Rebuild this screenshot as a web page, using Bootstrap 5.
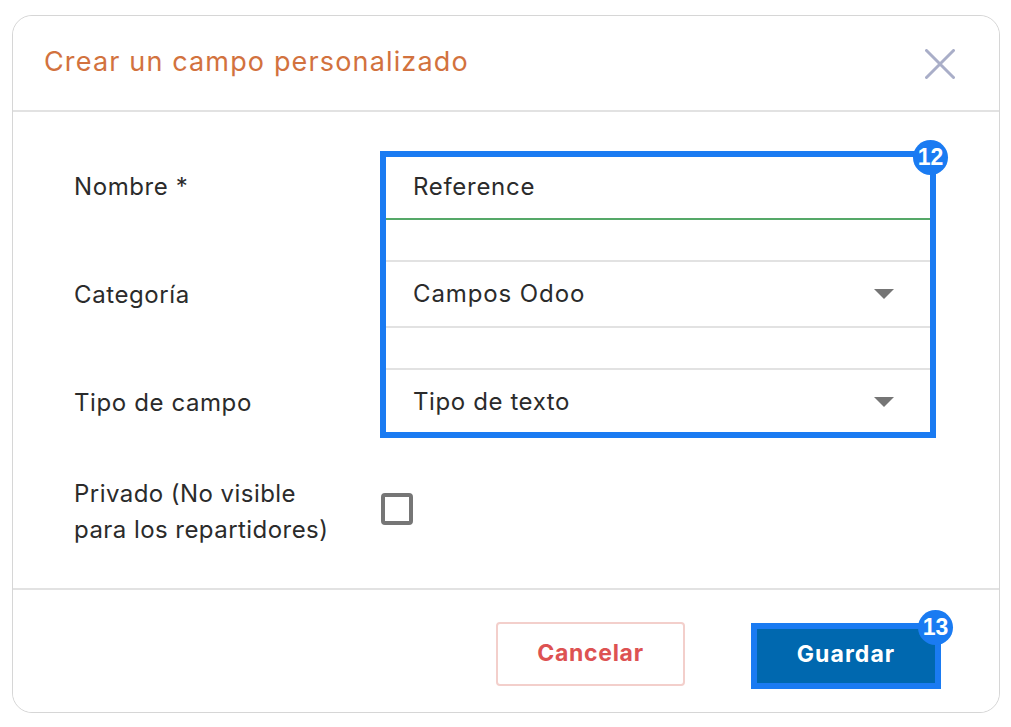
<!DOCTYPE html>
<html lang="es">
<head>
<meta charset="utf-8">
<title>Crear un campo personalizado</title>
<link href="https://cdn.jsdelivr.net/npm/bootstrap@5.3.0/dist/css/bootstrap.min.css" rel="stylesheet">
<style>
html,body{height:100%;background:#fff}
body{padding:15px 11px 14px 12px;font-family:Inter,"Open Sans",sans-serif;font-size:24px;letter-spacing:.6px;color:#2b2b2b;overflow:hidden}
.dlg{height:698px;border:1px solid #d6d6d6;border-radius:20px;background:#fff;--bs-card-inner-border-radius:20px}
.dlg-head{height:96px;padding:0 44px 0 31px;background:#fff;border-bottom:2px solid #e2e2e2}
.dlg-title{font-size:27px;font-weight:400;color:#d2723e;margin:0 0 1px;letter-spacing:1.15px}
.x-btn{width:30px;height:30px;display:block;margin-top:2px}
.dlg-body{padding:39px 63px 0 61px}
.lbl-col{width:306px;flex:none}
.lbl{height:108px;padding-top:18px;line-height:36px}
.hl{position:relative;border:6px solid #1a7bf2;width:556px;height:287px}
.fld{padding:0 36px 0 27px}
.fld-a{height:64px;letter-spacing:.9px}
.fld-b{height:62px;padding-top:2px}
.fld-input{height:63px;border-bottom:2px solid #55a868;width:100%;padding:0 27px 2px;border-top:0;border-left:0;border-right:0;outline:0;color:#2b2b2b;background:#fff;letter-spacing:.7px}
.gap-a{height:42px;border-bottom:2px solid #e2e2e2}
.gap-b{height:44px;border-top:2px solid #e2e2e2;border-bottom:2px solid #e2e2e2}
.caret{width:0;height:0;border-left:10px solid transparent;border-right:10px solid transparent;border-top:10px solid #757575}
.num{position:absolute;width:35px;height:35px;border-radius:50%;background:#1a7bf2;color:#fff;font:700 23px/35px "Liberation Sans",sans-serif;letter-spacing:0;text-align:center}
.num-a{top:-17px;right:-18px}
.num-b{top:-19px;right:-18px}
.priv{margin-top:1px;line-height:36px;letter-spacing:.45px}
.priv-lbl{width:306px;flex:none}
.chk{width:32px;height:32px;border:4px solid #767676;border-radius:4px;margin:17px 0 0 1px;background:#fff}
.dlg-foot{height:124px;padding:32px 58px 0 0;background:#fff;border-top:2px solid #e2e2e2;margin-top:auto}
.b-cancel{width:189px;height:64px;border:2px solid #f3cfcb;border-radius:4px;background:#fff;color:#dd5252;font-weight:700;font-size:23px;letter-spacing:.7px;padding:0 0 2px;margin-right:66px}
.b-save{position:relative;width:190px;height:66px;margin-top:1px;border:6px solid #1a7bf2;border-radius:0;background:#0068af;color:#fff;font-weight:700;font-size:23px;letter-spacing:1.1px;padding:0 0 4px}
.b-save:hover{background:#0068af;color:#fff;border-color:#1a7bf2}
.b-cancel:hover{background:#fff;color:#dd5252;border-color:#f3cfcb}
</style>
</head>
<body>
<div class="card dlg">
  <div class="card-header dlg-head d-flex align-items-center justify-content-between">
    <h5 class="dlg-title">Crear un campo personalizado</h5>
    <svg class="x-btn" viewBox="0 0 30 30" fill="none" stroke="#a9aec8" stroke-width="3" stroke-linecap="round" aria-label="Cerrar"><path d="M1.5 1.5 28.5 28.5M28.5 1.5 1.5 28.5"/></svg>
  </div>
  <div class="dlg-body">
    <div class="d-flex">
      <div class="lbl-col">
        <div class="lbl">Nombre *</div>
        <div class="lbl">Categoría</div>
        <div class="lbl">Tipo de campo</div>
      </div>
      <div class="hl">
        <span class="num num-a">12</span>
        <input class="fld-input" type="text" value="Reference">
        <div class="gap-a"></div>
        <div class="fld fld-a d-flex align-items-center justify-content-between"><span>Campos Odoo</span><i class="caret"></i></div>
        <div class="gap-b"></div>
        <div class="fld fld-b d-flex align-items-center justify-content-between"><span>Tipo de texto</span><i class="caret"></i></div>
      </div>
    </div>
    <div class="d-flex priv">
      <div class="priv-lbl">Privado (No visible<br>para los repartidores)</div>
      <div class="chk"></div>
    </div>
  </div>
  <div class="card-footer dlg-foot d-flex justify-content-end align-items-start">
    <button type="button" class="btn b-cancel">Cancelar</button>
    <button type="button" class="btn b-save">Guardar<span class="num num-b">13</span></button>
  </div>
</div>
</body>
</html>
